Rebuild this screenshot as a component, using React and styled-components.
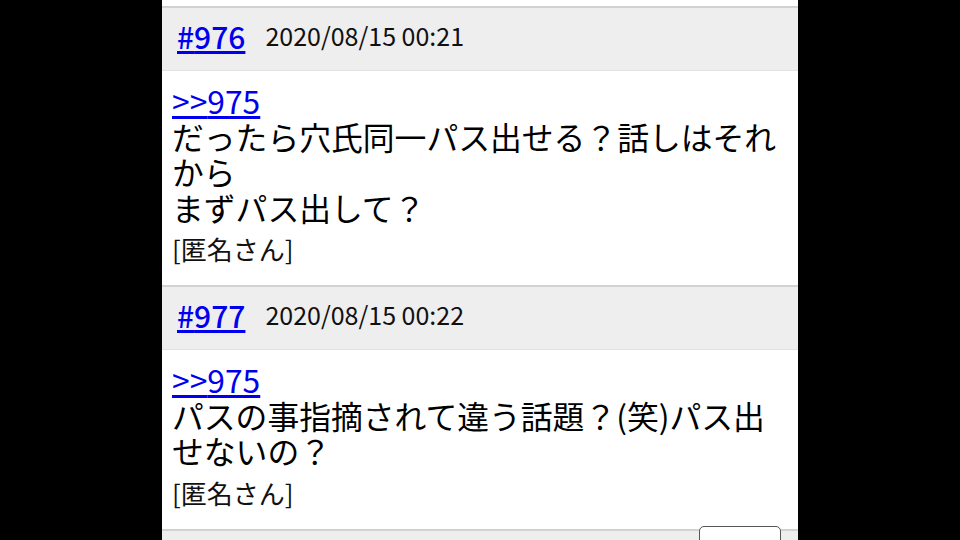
import React from "react";
import styled, { createGlobalStyle } from "styled-components";

const Global = createGlobalStyle`
  html, body { margin: 0; padding: 0; background: #000; }
  body { font-family: "Noto Sans CJK JP", "Noto Sans", sans-serif; color: #000; overflow: hidden; }
  * { box-sizing: border-box; }
`;

const Column = styled.main`
  width: 636px;
  margin: 0 auto;
  background: #fff;
  padding-top: 6px;
  min-height: 540px;
`;

const Post = styled.article`
  border-top: 2px solid #d2d2d2;
`;

const Header = styled.div`
  height: 63px;
  background: #eeeeee;
  border-bottom: 1px solid #e2e2e2;
  display: flex;
  align-items: center;
  gap: 20px;
  padding: 0 15px 7px;
`;

const Num = styled.a`
  font-size: 30px;
  font-weight: 500;
  color: #0000ee;
  text-decoration: underline;
  line-height: 1;
`;

const Date = styled.span`
  font-size: 25px;
  color: #111;
  line-height: 1;
`;

const Body = styled.div`
  padding: 12px 10px 19px;
  background: #fff;
`;

const Text = styled.div`
  font-size: 31.8px;
  line-height: 35.5px;
`;

const Anchor = styled.a`
  color: #0000ee;
  text-decoration: underline;
`;

const Name = styled.div`
  margin-top: 7px;
  font-size: 26px;
  line-height: 34px;
  color: #111;
`;

const FloatButton = styled.button`
  position: fixed;
  left: 699px;
  top: 526px;
  width: 82px;
  height: 40px;
  background: #fff;
  border: 1px solid #555;
  border-radius: 5px;
  padding: 0;
`;

const posts = [
  {
    no: 976,
    date: "2020/08/15 00:21",
    ref: 975,
    lines: ["だったら穴氏同一パス出せる？話しはそれから", "まずパス出して？"],
  },
  {
    no: 977,
    date: "2020/08/15 00:22",
    ref: 975,
    lines: ["パスの事指摘されて違う話題？(笑)パス出せないの？"],
  },
];

export default function App() {
  return (
    <>
      <Global />
      <Column>
        {posts.map((p) => (
          <Post key={p.no}>
            <Header>
              <Num href="#">#{p.no}</Num>
              <Date>{p.date}</Date>
            </Header>
            <Body>
              <Text>
                <Anchor href="#">&gt;&gt;{p.ref}</Anchor>
                {p.lines.map((l, i) => (
                  <div key={i}>{l}</div>
                ))}
              </Text>
              <Name>[匿名さん]</Name>
            </Body>
          </Post>
        ))}
        <Post>
          <Header />
        </Post>
      </Column>
      <FloatButton aria-label="menu" />
    </>
  );
}
